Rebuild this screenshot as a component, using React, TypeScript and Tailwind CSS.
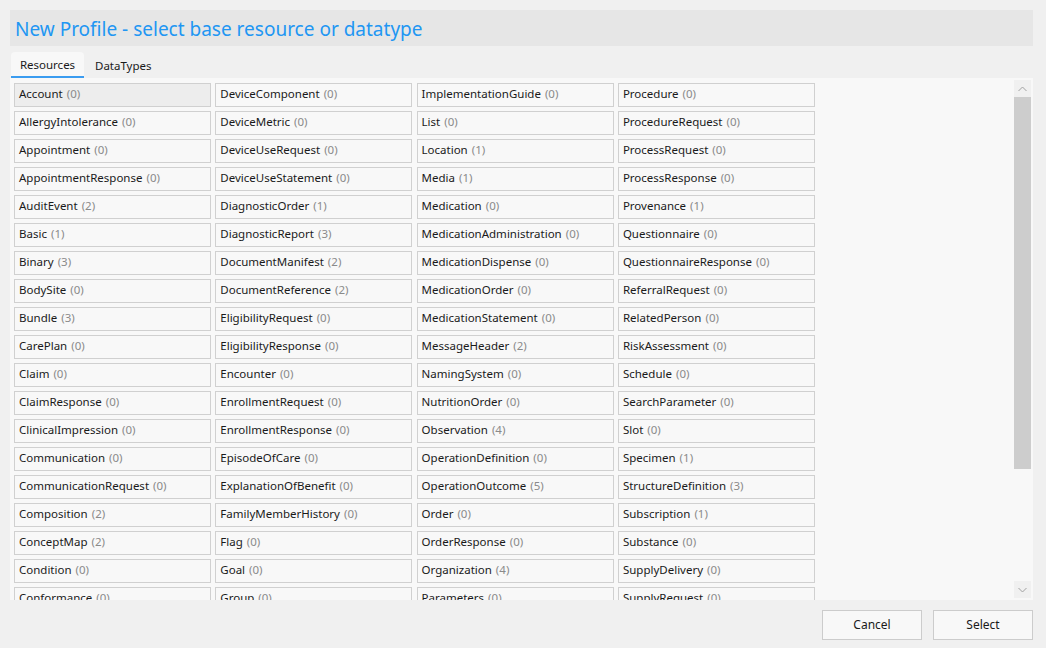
import React from "react";

const cols: [string, number][][] = [
  [
    ["Account", 0], ["AllergyIntolerance", 0], ["Appointment", 0], ["AppointmentResponse", 0], ["AuditEvent", 2],
    ["Basic", 1], ["Binary", 3], ["BodySite", 0], ["Bundle", 3], ["CarePlan", 0], ["Claim", 0], ["ClaimResponse", 0],
    ["ClinicalImpression", 0], ["Communication", 0], ["CommunicationRequest", 0], ["Composition", 2], ["ConceptMap", 2],
    ["Condition", 0], ["Conformance", 0], ["Contract", 0], ["Coverage", 0],
  ],
  [
    ["DeviceComponent", 0], ["DeviceMetric", 0], ["DeviceUseRequest", 0], ["DeviceUseStatement", 0], ["DiagnosticOrder", 1],
    ["DiagnosticReport", 3], ["DocumentManifest", 2], ["DocumentReference", 2], ["EligibilityRequest", 0],
    ["EligibilityResponse", 0], ["Encounter", 0], ["EnrollmentRequest", 0], ["EnrollmentResponse", 0], ["EpisodeOfCare", 0],
    ["ExplanationOfBenefit", 0], ["FamilyMemberHistory", 0], ["Flag", 0], ["Goal", 0], ["Group", 0],
    ["HealthcareService", 0], ["ImagingObjectSelection", 0],
  ],
  [
    ["ImplementationGuide", 0], ["List", 0], ["Location", 1], ["Media", 1], ["Medication", 0], ["MedicationAdministration", 0],
    ["MedicationDispense", 0], ["MedicationOrder", 0], ["MedicationStatement", 0], ["MessageHeader", 2], ["NamingSystem", 0],
    ["NutritionOrder", 0], ["Observation", 4], ["OperationDefinition", 0], ["OperationOutcome", 5], ["Order", 0],
    ["OrderResponse", 0], ["Organization", 4], ["Parameters", 0], ["Patient", 0], ["PaymentNotice", 0],
  ],
  [
    ["Procedure", 0], ["ProcedureRequest", 0], ["ProcessRequest", 0], ["ProcessResponse", 0], ["Provenance", 1],
    ["Questionnaire", 0], ["QuestionnaireResponse", 0], ["ReferralRequest", 0], ["RelatedPerson", 0], ["RiskAssessment", 0],
    ["Schedule", 0], ["SearchParameter", 0], ["Slot", 0], ["Specimen", 1], ["StructureDefinition", 3], ["Subscription", 1],
    ["Substance", 0], ["SupplyDelivery", 0], ["SupplyRequest", 0], ["TestScript", 0], ["ValueSet", 0],
  ],
];

const font = { fontFamily: '"Noto Sans", "Open Sans", sans-serif' };

export default function App() {
  return (
    <div className="w-[1046px] h-[648px] bg-[#f0f0f0] p-[10px] pr-[13px] flex flex-col text-[11.5px] text-[#1a1a1a]" style={font}>
      <div className="h-[36px] bg-[#e6e6e6] flex items-center pl-[5px] shrink-0">
        <span className="text-[19px] text-[#2196f3] leading-none mt-[2px]">New Profile - select base resource or datatype</span>
      </div>
      <div className="h-[32px] flex items-end pl-[1px] shrink-0">
        <div className="h-[26px] w-[73px] bg-[#f8f8f8] rounded-t-[4px] border-b-2 border-[#3b9cf0] flex items-center justify-center pt-[2px]">
          Resources
        </div>
        <div className="h-[26px] px-[11px] flex items-center pt-[2px]">DataTypes</div>
      </div>
      <div className="h-[522px] bg-[#f8f8f8] flex shrink-0 overflow-hidden">
        <div className="flex-1 overflow-hidden pl-[4px] pt-[5px] flex gap-[4.3px]">
          {cols.map((col, ci) => (
            <div key={ci} className="w-[197px] flex flex-col gap-[4px] shrink-0">
              {col.map(([name, n], ri) => (
                <div
                  key={ri}
                  className={`h-[24px] shrink-0 border border-[#d0d0d0] flex items-center pl-[4px] pb-[2px] whitespace-nowrap ${
                    ci === 0 && ri === 0 ? "bg-[#ededed]" : "bg-[#f8f8f8]"
                  }`}
                >
                  {name}
                  <span className="text-[#8a8a8a] ml-[4px]">({n})</span>
                </div>
              ))}
            </div>
          ))}
        </div>
        <div className="w-[17px] mr-[2px] mt-[2px] mb-[2px] flex flex-col shrink-0">
          <div className="h-[17px] bg-[#f0f0f0] flex items-center justify-center">
            <svg width="9" height="6" viewBox="0 0 9 6"><path d="M0.5 5 L4.5 1 L8.5 5" fill="none" stroke="#a0a0a0" strokeWidth="1" /></svg>
          </div>
          <div className="h-[372px] bg-[#cdcdcd]" />
          <div className="flex-1" />
          <div className="h-[17px] bg-[#f0f0f0] flex items-center justify-center">
            <svg width="9" height="6" viewBox="0 0 9 6"><path d="M0.5 1 L4.5 5 L8.5 1" fill="none" stroke="#a0a0a0" strokeWidth="1" /></svg>
          </div>
        </div>
      </div>
      <div className="flex justify-end gap-[11px] pt-[10px]">
        <button className="w-[100px] h-[30px] border border-[#cccccc] bg-[#f8f8f8] text-[12px]">Cancel</button>
        <button className="w-[100px] h-[30px] border border-[#cccccc] bg-[#f8f8f8] text-[12px]">Select</button>
      </div>
    </div>
  );
}
